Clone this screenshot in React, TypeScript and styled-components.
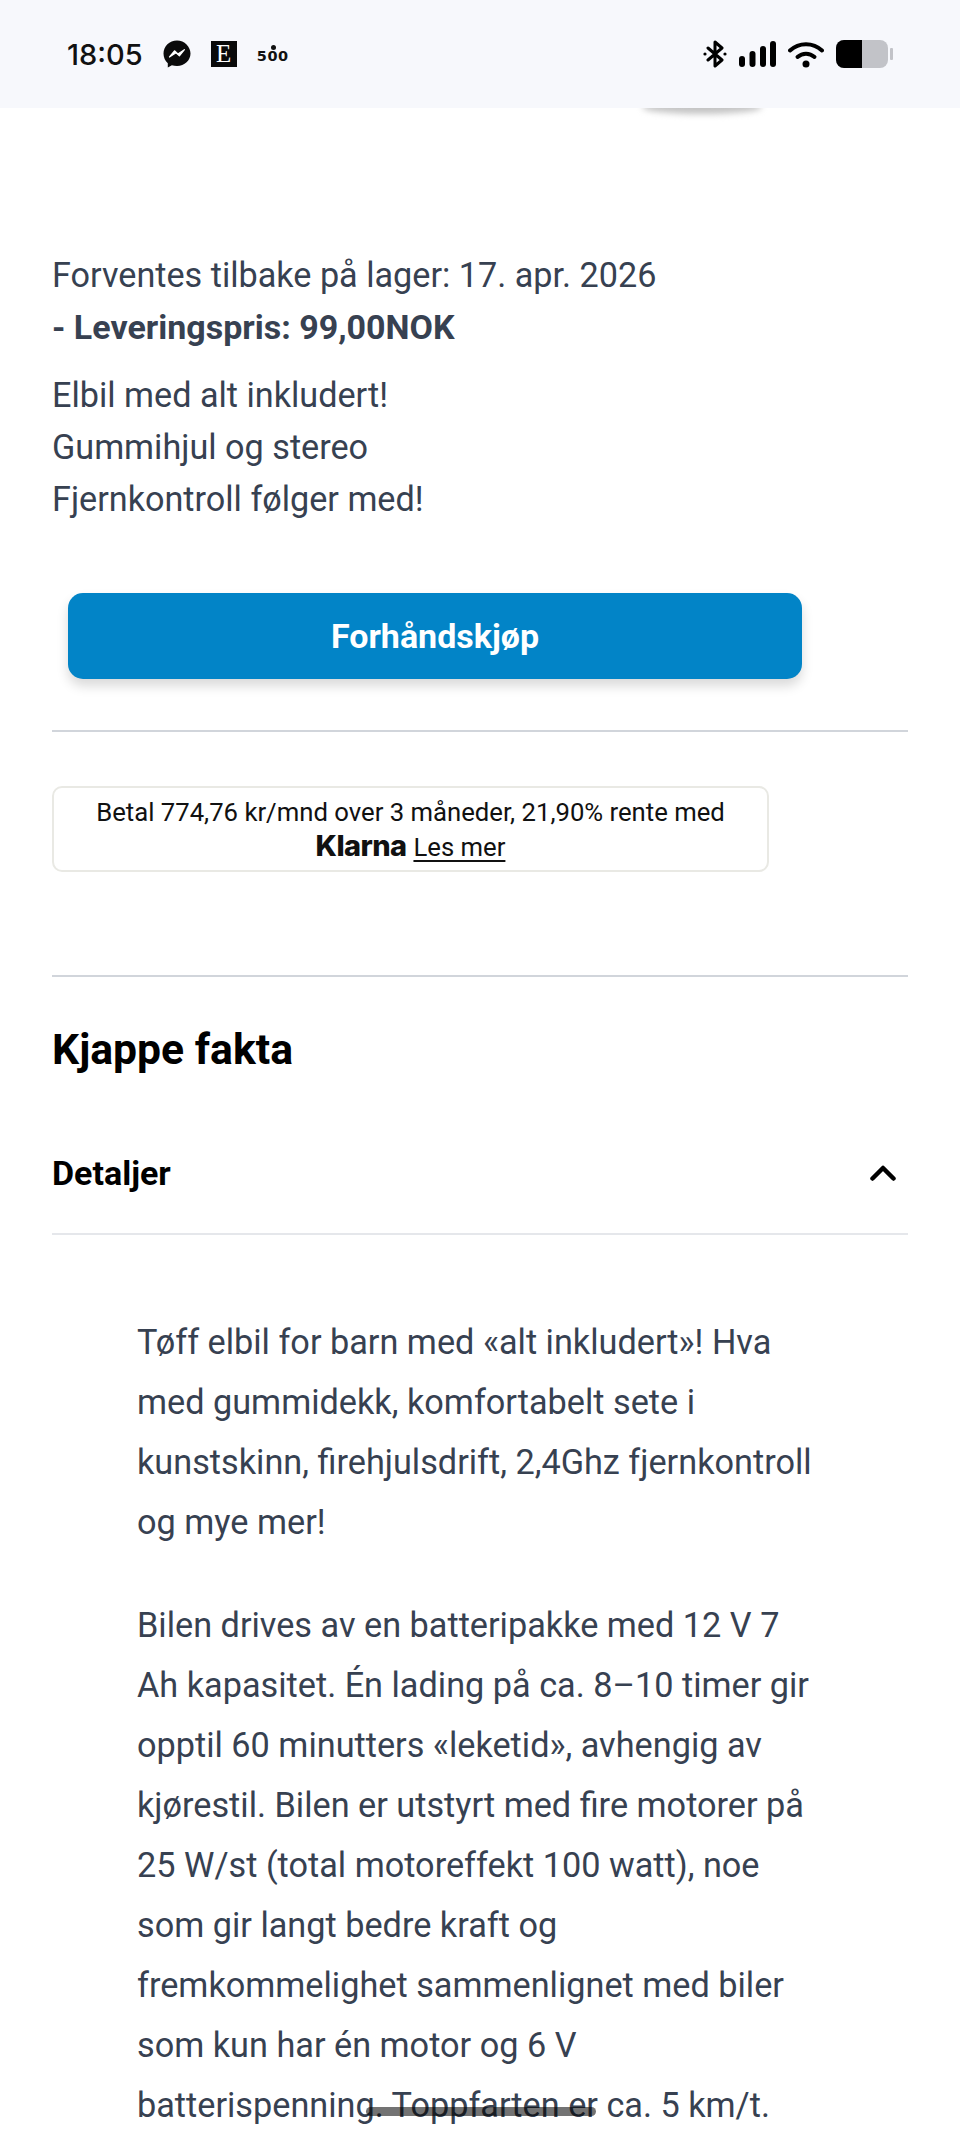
import React from "react";
import styled, { createGlobalStyle } from "styled-components";

const GlobalStyle = createGlobalStyle`
  html, body {
    margin: 0;
    padding: 0;
    background: #fff;
    font-family: Roboto, "Liberation Sans", sans-serif;
  }
`;

const Page = styled.div`
  position: relative;
  width: 960px;
  height: 2137px;
  overflow: hidden;
  background: #fff;
`;

const StatusBar = styled.header`
  height: 108px;
  box-sizing: border-box;
  padding: 0 67px 0 67px;
  display: flex;
  align-items: center;
  justify-content: space-between;
  background: #f7f8fc;
  position: relative;
  z-index: 2;
`;

const StatusGroup = styled.div<{ $gap: number }>`
  display: flex;
  align-items: center;
  gap: ${({ $gap }) => $gap}px;
`;

const Clock = styled.span`
  font-family: Inter, Roboto, sans-serif;
  font-size: 29px;
  font-weight: 500;
  color: #111;
`;

const EtsyMark = styled.span`
  width: 26px;
  height: 26px;
  background: #0a0a0a;
  color: #fff;
  display: flex;
  align-items: center;
  justify-content: center;
  font-family: "Liberation Serif", serif;
  font-size: 25px;
  line-height: 26px;
`;

const FiveHundred = styled.span`
  position: relative;
  font-family: "DejaVu Sans", sans-serif;
  font-size: 14.5px;
  font-weight: 700;
  letter-spacing: 0.6px;
  color: #111;
  top: 2px;
  &::before {
    content: "";
    position: absolute;
    left: 50%;
    top: -3px;
    width: 5px;
    height: 5px;
    margin-left: -2px;
    border-radius: 50%;
    background: #111;
  }
`;

const Battery = styled.div`
  display: flex;
  align-items: center;
  gap: 2px;
`;

const BatteryBody = styled.div`
  width: 52px;
  height: 28px;
  border-radius: 8px;
  overflow: hidden;
  background: #c2c3c8;
`;

const BatteryLevel = styled.div`
  height: 100%;
  background: #000;
`;

const BatteryTip = styled.div`
  width: 3px;
  height: 12px;
  border-radius: 1px;
  background: #c2c3c8;
`;

const ImageShadow = styled.div`
  position: absolute;
  top: 100px;
  left: 642px;
  width: 120px;
  height: 14px;
  border-radius: 50%;
  background: #c4c4c4;
  filter: blur(3px);
  z-index: 1;
`;

const Content = styled.main`
  padding: 141px 52px 0;
`;

const StockText = styled.p`
  margin: 0;
  font-size: 34.2px;
  line-height: 52px;
  color: #374151;
`;

const PriceText = styled(StockText)`
  font-size: 34px;
  font-weight: 700;
`;

const Description = styled(StockText)`
  margin-top: 16px;
`;

const BuyButton = styled.button`
  display: block;
  width: 734px;
  height: 86px;
  margin: 68px 0 0 16px;
  border: none;
  border-radius: 15px;
  background: #0284c7;
  color: #fff;
  font-family: inherit;
  font-size: 34px;
  font-weight: 700;
  box-shadow: 0 7px 12px rgba(0, 0, 0, 0.15);
`;

const Divider = styled.hr<{ $top: number; $color?: string }>`
  margin: ${({ $top }) => $top}px 0 0;
  border: none;
  height: 2px;
  background: ${({ $color }) => $color || "#d1d5db"};
`;

const KlarnaBox = styled.div`
  width: 717px;
  height: 86px;
  box-sizing: border-box;
  margin-top: 54px;
  padding-top: 8px;
  border: 2px solid #e9e9e4;
  border-radius: 10px;
  text-align: center;
  font-size: 25.7px;
  line-height: 33px;
  color: #111;
`;

const KlarnaLogo = styled.span`
  font-family: Inter, sans-serif;
  font-size: 29px;
  font-weight: 800;
  letter-spacing: -0.6px;
  margin-right: 7px;
`;

const ReadMore = styled.a`
  color: #111;
  text-decoration: underline;
  text-underline-offset: 4px;
`;

const Heading = styled.h2`
  margin: 44px 0 0;
  font-size: 42.7px;
  line-height: 56px;
  font-weight: 700;
  color: #000;
`;

const AccordionHeader = styled.div`
  height: 60px;
  margin-top: 66px;
  padding-right: 12px;
  display: flex;
  align-items: center;
  justify-content: space-between;
  font-size: 34px;
  font-weight: 700;
  color: #000;
`;

const Body = styled.div`
  padding: 77px 0 0 85px;
  width: 690px;
`;

const BodyText = styled.p`
  margin: 0 0 43px;
  font-size: 34.25px;
  line-height: 60px;
  color: #374151;
`;

const HomeBar = styled.div`
  position: absolute;
  left: 366px;
  top: 2107px;
  width: 230px;
  height: 9px;
  border-radius: 5px;
  background: rgba(0, 0, 0, 0.55);
`;

const MessengerIcon = () => (
  <svg width="28" height="28" viewBox="0 0 28 28">
    <path
      d="M14 0.5C6.4 0.5 0.5 6.1 0.5 13.6c0 3.9 1.6 7.3 4.3 9.6v4.3l4.1-2.2c1.6.5 3.3.7 5.1.7 7.6 0 13.5-5.5 13.5-12.4S21.6.5 14 .5z"
      fill="#0a0a0a"
    />
    <path
      d="M6.5 17l5-6.2 3.4 3.2 6.5-4.3-5 6.2-3.4-3.2z"
      fill="#fff"
      stroke="#fff"
      strokeWidth="1.2"
      strokeLinejoin="round"
    />
  </svg>
);

const BluetoothIcon = () => (
  <svg width="24" height="28" viewBox="0 0 24 28" fill="none">
    <path
      d="M5 8l14 12-7 6V2l7 6L5 20"
      stroke="#000"
      strokeWidth="3"
      strokeLinejoin="round"
      strokeLinecap="round"
    />
    <circle cx="2" cy="14" r="1.6" fill="#000" />
    <circle cx="22" cy="14" r="1.6" fill="#000" />
  </svg>
);

const SignalIcon = () => (
  <svg width="37" height="26" viewBox="0 0 37 26" fill="#000">
    <rect x="0" y="15" width="6" height="11" rx="3" />
    <rect x="10.5" y="10" width="6" height="16" rx="3" />
    <rect x="21" y="5" width="6" height="21" rx="3" />
    <rect x="31" y="0" width="6" height="26" rx="3" />
  </svg>
);

const WifiIcon = () => (
  <svg width="36" height="27" viewBox="0 0 36 27" fill="none">
    <path d="M2 9.5C11 1 25 1 34 9.5" stroke="#000" strokeWidth="4" strokeLinecap="round" />
    <path d="M9.5 16c5-4.5 12-4.5 17 0" stroke="#000" strokeWidth="4" strokeLinecap="round" />
    <circle cx="18" cy="23" r="3.5" fill="#000" />
  </svg>
);

const ChevronUp = () => (
  <svg width="26" height="16" viewBox="0 0 26 16" fill="none">
    <path d="M2.5 13.5L13 3l10.5 10.5" stroke="#000" strokeWidth="4.5" strokeLinecap="round" strokeLinejoin="round" />
  </svg>
);

const App = () => {
  return (
    <Page>
      <GlobalStyle />
      <StatusBar>
        <StatusGroup $gap={20}>
          <Clock>18:05</Clock>
          <MessengerIcon />
          <EtsyMark>E</EtsyMark>
          <FiveHundred>500</FiveHundred>
        </StatusGroup>
        <StatusGroup $gap={12}>
          <BluetoothIcon />
          <SignalIcon />
          <WifiIcon />
          <Battery>
            <BatteryBody>
              <BatteryLevel style={{ width: "50%" }} />
            </BatteryBody>
            <BatteryTip />
          </Battery>
        </StatusGroup>
      </StatusBar>
      <ImageShadow />
      <Content>
        <StockText>Forventes tilbake på lager: 17. apr. 2026</StockText>
        <PriceText>- Leveringspris: 99,00NOK</PriceText>
        <Description>
          Elbil med alt inkludert!
          <br />
          Gummihjul og stereo
          <br />
          Fjernkontroll følger med!
        </Description>
        <BuyButton>Forhåndskjøp</BuyButton>
        <Divider $top={51} />
        <KlarnaBox>
          Betal 774,76 kr/mnd over 3 måneder, 21,90% rente med
          <br />
          <KlarnaLogo>Klarna</KlarnaLogo>
          <ReadMore>Les mer</ReadMore>
        </KlarnaBox>
        <Divider $top={103} />
        <Heading>Kjappe fakta</Heading>
        <AccordionHeader>
          Detaljer
          <ChevronUp />
        </AccordionHeader>
        <Divider $top={30} $color="#e5e7eb" />
        <Body>
          <BodyText>
            Tøff elbil for barn med «alt inkludert»! Hva med gummidekk, komfortabelt sete i kunstskinn,
            firehjulsdrift, 2,4Ghz fjernkontroll og mye mer!
          </BodyText>
          <BodyText>
            Bilen drives av en batteripakke med 12 V 7 Ah kapasitet. Én lading på ca. 8–10 timer gir
            opptil 60 minutters «leketid», avhengig av kjørestil. Bilen er utstyrt med fire motorer på
            25 W/st (total motoreffekt 100 watt), noe som gir langt bedre kraft og fremkommelighet
            sammenlignet med biler som kun har én motor og 6 V batterispenning. Toppfarten er ca. 5
            km/t.
          </BodyText>
        </Body>
      </Content>
      <HomeBar />
    </Page>
  );
};

export default App;
